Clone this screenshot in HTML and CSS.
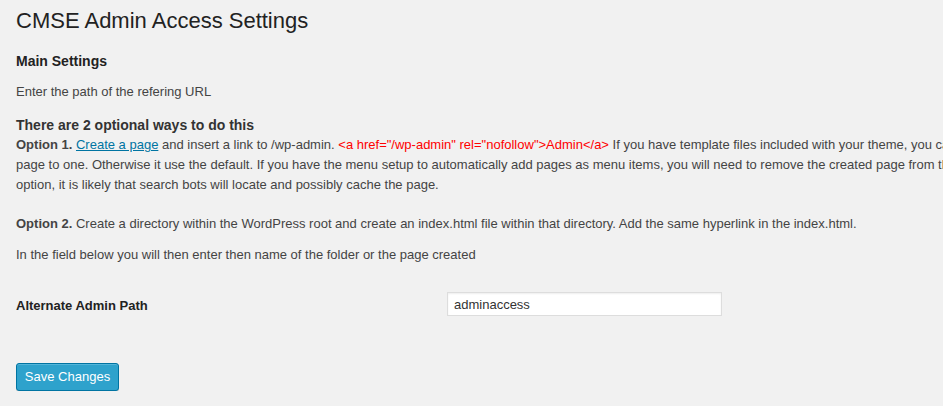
FILE: index.html
```html
<!DOCTYPE html>
<html>
<head>
<meta charset="utf-8">
<link rel="stylesheet" href="styles.css">
</head>
<body>
<div class="wrap">
  <h2 class="page-title">CMSE Admin Access Settings</h2>
  <h3 class="section-title">Main Settings</h3>
  <p class="intro">Enter the path of the refering URL</p>
  <div class="ways">
    <p class="ways-title">There are 2 optional ways to do this</p>
    <p class="option1"><strong>Option 1.</strong> <a href="#" class="link">Create a page</a> and insert a link to /wp-admin. <span class="code">&lt;a href="/wp-admin" rel="nofollow"&gt;Admin&lt;/a&gt;</span> If you have template files included with your theme, you can set the template of the<br>page to one. Otherwise it use the default. If you have the menu setup to automatically add pages as menu items, you will need to remove the created page from the menu. With this<br>option, it is likely that search bots will locate and possibly cache the page.</p>
    <p class="option2"><strong>Option 2.</strong> Create a directory within the WordPress root and create an index.html file within that directory. Add the same hyperlink in the index.html.</p>
    <p class="field-note">In the field below you will then enter then name of the folder or the page created</p>
  </div>
  <div class="form-row">
    <label class="field-label" for="path">Alternate Admin Path</label>
    <input id="path" class="text-input" type="text" value="adminaccess">
  </div>
  <button class="save-btn" type="button">Save Changes</button>
</div>
</body>
</html>
```
FILE: styles.css
```css
html, body {
  margin: 0;
  padding: 0;
  background: #f1f1f1;
  overflow: hidden;
}
body {
  font-family: "Liberation Sans", Arial, sans-serif;
  font-size: 13px;
  color: #444;
}
.wrap {
  width: 1300px;
  padding: 0 16px;
}
.page-title {
  margin: 0;
  padding-top: 6px;
  font-size: 22px;
  line-height: 29px;
  font-weight: 400;
  color: #222;
}
.section-title {
  margin: 17px 0 0;
  font-size: 14px;
  line-height: 18px;
  font-weight: 700;
  color: #222;
}
.intro {
  margin: 12px 0 0;
  line-height: 20px;
}
.ways {
  margin-top: 13px;
}
.ways p {
  margin: 0;
  line-height: 20px;
}
.ways-title {
  font-size: 14px;
  font-weight: 700;
  color: #333;
}
.ways strong {
  color: #444;
}
.link {
  color: #0074a2;
}
.code {
  color: #f00;
}
.ways .option2 {
  margin-top: 19px;
}
.ways .field-note {
  margin-top: 11px;
}
.form-row {
  display: flex;
  align-items: center;
  margin-top: 27px;
}
.field-label {
  width: 431px;
  padding-top: 3px;
  font-size: 13px;
  font-weight: 700;
  color: #222;
}
.text-input {
  box-sizing: border-box;
  width: 275px;
  height: 24px;
  margin: 0;
  padding: 2px 6px;
  border: 1px solid #ddd;
  box-shadow: inset 0 1px 2px rgba(0,0,0,0.07);
  background: #fff;
  font-family: "Liberation Sans", Arial, sans-serif;
  font-size: 13px;
  color: #333;
  outline: none;
}
.save-btn {
  display: block;
  box-sizing: border-box;
  margin-top: 47px;
  width: 103px;
  height: 28px;
  padding: 0 0 1px;
  white-space: nowrap;
  border: 1px solid #0074a2;
  border-radius: 3px;
  background: #2ea2cc;
  box-shadow: inset 0 1px 0 rgba(120,200,230,0.5), 0 1px 0 rgba(0,0,0,0.15);
  color: #fff;
  font-family: "Liberation Sans", Arial, sans-serif;
  font-size: 13px;
  cursor: pointer;
}
```
